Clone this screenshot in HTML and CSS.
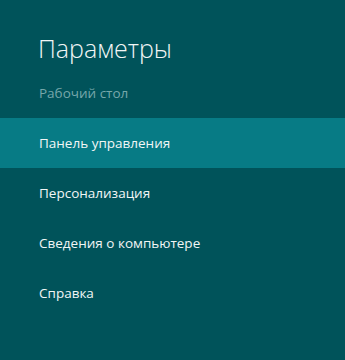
FILE: index.html
```html
<!DOCTYPE html>
<html lang="ru">
<head>
    <meta charset="UTF-8">
    <title>Параметры</title>
    <link rel="stylesheet" href="styles.css">
</head>
<body>
    <div class="charm">
        <h1 class="charm-title">Параметры</h1>
        <div class="charm-subtitle">Рабочий стол</div>
        <ul class="charm-list">
            <li class="charm-item active">Панель управления</li>
            <li class="charm-item">Персонализация</li>
            <li class="charm-item">Сведения о компьютере</li>
            <li class="charm-item">Справка</li>
        </ul>
    </div>
</body>
</html>
```

FILE: styles.css
```css
html, body {
    margin: 0;
    padding: 0;
    height: 100%;
}

body {
    background: #00535a;
    font-family: "Open Sans", "Noto Sans", sans-serif;
    color: #f2f6f6;
}

.charm {
    padding-top: 30px;
}

.charm-title {
    margin: 0 0 0 38px;
    font-size: 25px;
    font-weight: 300;
    line-height: 36px;
}

.charm-subtitle {
    margin: 17px 0 0 39px;
    font-size: 13.5px;
    line-height: 20px;
    color: #76a7aa;
}

.charm-list {
    list-style: none;
    margin: 15px 0 0 0;
    padding: 0;
}

.charm-item {
    padding: 0 0 0 39px;
    height: 50px;
    line-height: 50px;
    font-size: 13.5px;
}

.charm-item.active {
    background: #077b85;
}
```
